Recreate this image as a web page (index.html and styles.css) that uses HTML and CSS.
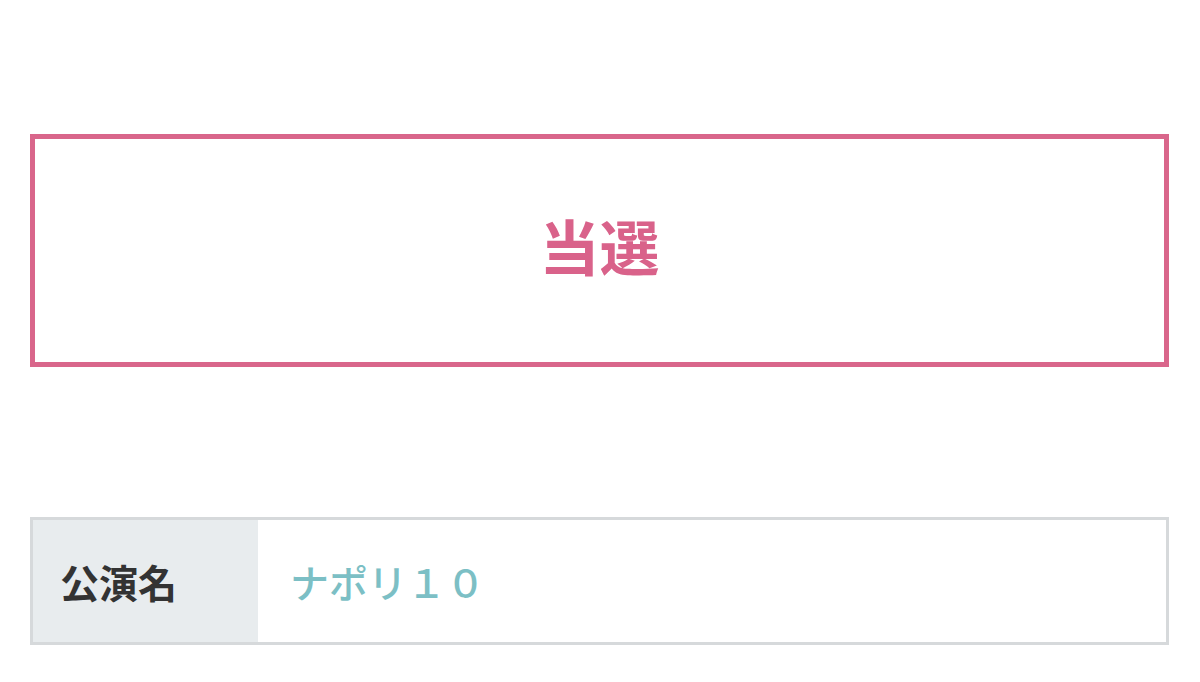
FILE: index.html
```html
<!DOCTYPE html>
<html lang="ja">
  <head>
    <meta charset="UTF-8" />
    <meta name="viewport" content="width=device-width, initial-scale=1.0" />
    <title>抽選結果</title>
    <link rel="stylesheet" href="styles.css">
  </head>

  <body>
    <div class="container">
      <div class="result-box">
        <p class="result-text">当選</p>
      </div>

      <table class="detail-table">
        <tbody>
          <tr>
            <th>公演名</th>
            <td>ナポリ１０</td>
          </tr>
        </tbody>
      </table>
    </div>
  </body>
</html>
```

FILE: styles.css
```css
body {
  margin: 0;
  background-color: #fff;
  font-family: "Noto Sans CJK JP", "Noto Sans", sans-serif;
}

.container {
  padding: 134px 31px 0 30px;
}

.result-box {
  height: 223px;
  border: 5px solid #d9668b;
  display: flex;
  align-items: center;
  justify-content: center;
}

.result-text {
  margin: 0;
  color: #d9628a;
  font-size: 60px;
  font-weight: bold;
  line-height: 1;
  transform: translateY(-6px);
}

.detail-table {
  width: 100%;
  margin-top: 150px;
  border-collapse: collapse;
  border: 3px solid #d6d9db;
}

.detail-table th,
.detail-table td {
  height: 122px;
  padding: 0;
  text-align: left;
  font-size: 39px;
  line-height: 1;
}

.detail-table th {
  width: 198px;
  padding-left: 27px;
  background-color: #e8ecee;
  color: #333;
  font-weight: bold;
}

.detail-table td {
  padding-left: 32px;
  color: #7cbfc5;
  font-weight: 500;
}
```
